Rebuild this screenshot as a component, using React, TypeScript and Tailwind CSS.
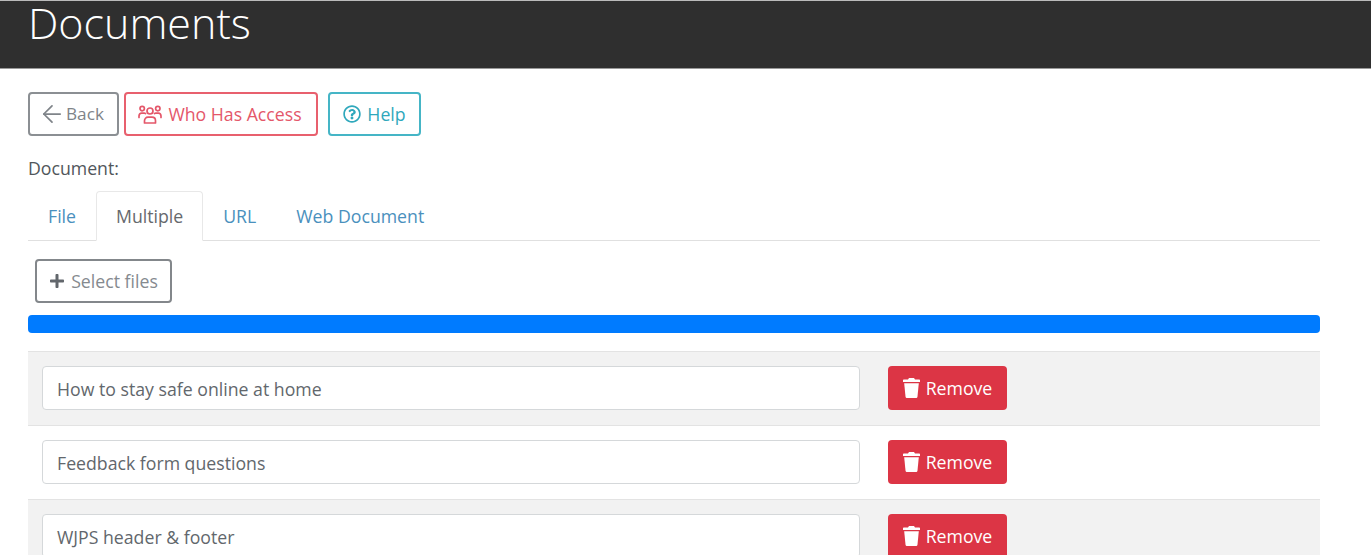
import React from 'react';
import { ArrowLeft } from 'lucide-react';
import { FaPlus, FaRegQuestionCircle } from 'react-icons/fa';

const rows = ['How to stay safe online at home', 'Feedback form questions', 'WJPS header & footer'];

const tabs = [
  { label: 'File', active: false },
  { label: 'Multiple', active: true },
  { label: 'URL', active: false },
  { label: 'Web Document', active: false },
];

const PeopleIcon = () => (
  <svg width="24" height="19" viewBox="0 0 24 19" fill="none" stroke="currentColor" strokeWidth="1.7" className="shrink-0">
    <circle cx="12" cy="6" r="3" />
    <path d="M6.5 18v-2.2c0-2 1.5-3.6 3.5-3.6h4c2 0 3.5 1.6 3.5 3.6V18z" strokeLinejoin="round" />
    <circle cx="4.2" cy="3.6" r="2.2" />
    <circle cx="19.8" cy="3.6" r="2.2" />
    <path d="M1 12.5v-1.6c0-1.6 1.1-2.7 2.6-2.7h2.6c.5 0 1 .1 1.4.4M23 12.5v-1.6c0-1.6-1.1-2.7-2.6-2.7h-2.6c-.5 0-1 .1-1.4.4" strokeLinecap="round" />
  </svg>
);

const TrashIcon = () => (
  <svg width="17" height="20" viewBox="0 0 17 20" fill="currentColor" className="shrink-0">
    <path d="M6 0h5l1 1.5h4c.6 0 1 .4 1 1V4H0V2.500c0-.6.4-1 1-1h4z" />
    <path d="M1.200 5.200h14.600L14.500 18.400c-.1.9-.8 1.600-1.700 1.600H4.200c-.9 0-1.600-.7-1.700-1.600z" />
  </svg>
);

export default function App() {
  return (
    <div className="h-[555px] overflow-hidden bg-white font-['Open_Sans','Liberation_Sans',sans-serif] text-[17.7px] text-[#62676c]">
      {/* Title bar */}
      <header className="h-[69px] border-t border-b border-t-[#bbbbbb] border-b-[#999999] bg-[#2f2f2f] pl-[28px]">
        <h1 className="text-[43px] leading-[44px] font-light text-white">Documents</h1>
      </header>

      <main className="pl-[28px] pr-[51px] pt-[23px]">
        {/* Actions */}
        <div className="flex">
          <button className="flex h-[44px] w-[91px] items-center rounded border-2 border-[#8b8f93] pl-[8px] text-[#7f8489]">
            <ArrowLeft size={28} strokeWidth={1.5} className="shrink-0" />
            <span className="text-[17.2px]">Back</span>
          </button>
          <button className="ml-[5px] flex h-[44px] w-[194px] items-center justify-center gap-[6px] rounded border-2 border-[#e8606e] pr-[2px] text-[#e4576a]">
            <PeopleIcon />
            Who Has Access
          </button>
          <button className="ml-[10px] flex h-[44px] w-[93px] items-center justify-center gap-[6px] rounded border-2 border-[#45b5c6] text-[#2fa8bc]">
            <FaRegQuestionCircle size={18} className="shrink-0" />
            Help
          </button>
        </div>

        <p className="mt-[20px] h-[24px] leading-[24px] text-[#51565b]">Document:</p>

        {/* Tabs */}
        <nav className="mt-[11px] flex h-[50px] border-b border-[#e0e0e0]">
          {tabs.map((t) => (
            <a
              key={t.label}
              className={`-mb-px flex items-center rounded-t border px-[19px] ${
                t.active ? 'border-[#e8e8e8] border-b-white bg-white text-[#66696d]' : 'border-transparent text-[#4a90bd]'
              }`}
            >
              {t.label}
            </a>
          ))}
        </nav>

        <button className="mt-[18px] ml-[7px] flex h-[44px] w-[137px] items-center justify-center gap-[6px] rounded border-2 border-[#83878b] text-[#858a8f]">
          <FaPlus size={16} className="shrink-0 text-[#62676c]" />
          Select files
        </button>

        {/* Upload progress */}
        <div className="mt-[12px] h-[18px] rounded bg-[#007bff]" />

        {/* File rows */}
        <div className="mt-[18px]">
          {rows.map((name, i) => (
            <div
              key={name}
              className={`flex h-[74px] items-start border-t border-[#e3e3e3] pl-[14px] pt-[14px] ${i % 2 === 0 ? 'bg-[#f2f2f2]' : 'bg-white'}`}
            >
              <div className="flex h-[44px] w-[818px] items-center rounded border border-[#d5d8da] bg-white pl-[14px] pt-[2px]">
                {name}
              </div>
              <button className="ml-[28px] flex h-[44px] w-[119px] items-center justify-center gap-[6px] rounded bg-[#dc3545] text-white">
                <TrashIcon />
                Remove
              </button>
            </div>
          ))}
        </div>
      </main>
    </div>
  );
}
